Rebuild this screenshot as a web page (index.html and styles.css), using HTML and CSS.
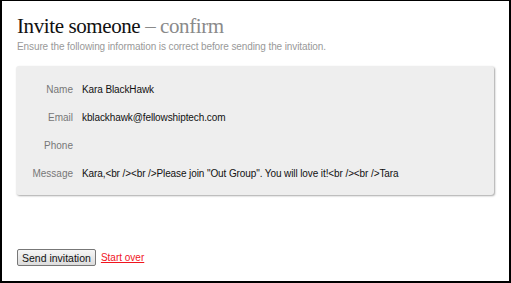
FILE: index.html
```html
<!DOCTYPE html>
<html lang="en">
<head>
  <meta charset="UTF-8" />
  <title>Invite someone - confirm</title>
  <link rel="stylesheet" href="styles.css">
</head>
<body>
  <div class="frame">
    <h1>Invite someone <span class="step">&ndash; confirm</span></h1>
    <p class="hint">Ensure the following information is correct before sending the invitation.</p>
    <div class="summary">
      <table>
        <tr><th>Name</th><td>Kara BlackHawk</td></tr>
        <tr><th>Email</th><td>kblackhawk@fellowshiptech.com</td></tr>
        <tr><th>Phone</th><td></td></tr>
        <tr><th>Message</th><td>Kara,&lt;br /&gt;&lt;br /&gt;Please join "Out Group". You will love it!&lt;br /&gt;&lt;br /&gt;Tara</td></tr>
      </table>
    </div>
    <div class="actions">
      <button type="button">Send invitation</button>
      <a href="#">Start over</a>
    </div>
  </div>
</body>
</html>
```

FILE: styles.css
```css
body {
  margin: 0;
  background: #fff;
  font-family: 'Liberation Sans', Arial, sans-serif;
}
.frame {
  box-sizing: border-box;
  width: 511px;
  height: 283px;
  border: 2px solid #000;
  border-top-width: 1px;
  padding: 12px 15px 0 14px;
}
h1 {
  margin: 0 0 0 1px;
  font-family: 'Liberation Serif', 'Times New Roman', serif;
  font-weight: normal;
  font-size: 21px;
  letter-spacing: -0.4px;
  line-height: 26px;
  color: #111;
}
h1 .step { color: #8a8a8a; }
.hint {
  margin: 1px 0 0 1px;
  font-size: 10px;
  letter-spacing: -0.1px;
  line-height: 13px;
  color: #999;
}
.summary {
  margin-top: 13px;
  height: 129px;
  background: #eee;
  border-radius: 3px;
  box-shadow: 1px 1px 2px rgba(0,0,0,0.35);
  padding-top: 9px;
  box-sizing: border-box;
}
table {
  border-collapse: collapse;
  font-size: 10px;
}
th {
  width: 57px;
  padding: 0 9px 0 0;
  text-align: right;
  font-weight: normal;
  color: #777;
  height: 28px;
}
td {
  padding: 0;
  color: #111;
  height: 28px;
  letter-spacing: -0.1px;
}
.actions {
  margin-top: 54px;
  display: flex;
  align-items: center;
  gap: 5px;
}
button {
  margin-left: 1px;
  font-family: 'Liberation Sans', Arial, sans-serif;
  font-size: 10.5px;
  height: 17px;
  padding: 0 4px;
  color: #111;
  background: linear-gradient(#f6f6f6, #dcdcdc);
  border: 1px solid #777;
  border-radius: 2px;
}
.actions a {
  font-size: 10px;
  color: #f0141e;
}
```
